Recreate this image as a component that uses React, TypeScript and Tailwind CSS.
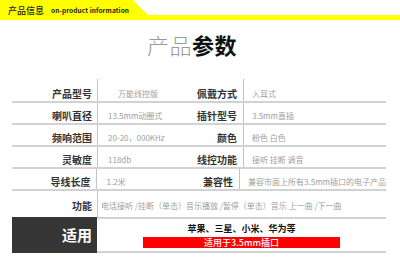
const font = { fontFamily: '"Noto Sans CJK SC", "Noto Sans", sans-serif' };

interface Row {
  l1: string;
  v1: string;
  pad1: string;
  l2: string;
  v2: string;
}

const rows: Row[] = [
  { l1: "产品型号", v1: "万能线控版", pad1: "pl-[20px]", l2: "佩戴方式", v2: "入耳式" },
  { l1: "喇叭直径", v1: "13.5mm动圈式", pad1: "pl-[10px]", l2: "插针型号", v2: "3.5mm直插" },
  { l1: "频响范围", v1: "20-20，000KHz", pad1: "pl-[10px]", l2: "颜色", v2: "粉色 白色" },
  { l1: "灵敏度", v1: "118db", pad1: "pl-[10px]", l2: "线控功能", v2: "接听 挂断 调音" },
  { l1: "导线长度", v1: "1.2米", pad1: "pl-[10px]", l2: "兼容性", v2: "兼容市面上所有3.5mm插口的电子产品" },
];

export default function App() {
  return (
    <div className="w-[400px] h-[260px] bg-white overflow-hidden" style={font}>
      {/* yellow header tab */}
      <div className="h-[20px] w-full bg-[#ffff00] flex items-center pl-[8px] gap-[7px] text-[#222] [clip-path:polygon(0_0,133px_0,148px_15px,100%_15px,100%_100%,0_100%)]">
        <span className="text-[9px] leading-none font-medium">产品信息</span>
        <span className="text-[6.5px] leading-none font-bold tracking-[0.1px]">on-product information</span>
      </div>

      <div className="mt-[11px] ml-[147px] text-[22px] leading-[26px] tracking-[0.5px]">
        <span className="text-[#999] font-light">产品</span>
        <span className="text-[#111] font-bold">参数</span>
      </div>

      <div className="mt-[22px] ml-[12px] w-[374px]">
        {rows.map((r, i) => (
          <div
            key={r.l1}
            className={`flex border-b-2 border-[#d2d2d2] ${i === 0 ? "h-[24px]" : "h-[22px]"}`}
          >
            <div className="w-[85px] flex items-end justify-end pr-[5px] pb-[1px] text-[10px] leading-[12px] font-bold text-[#333]">
              {r.l1}
            </div>
            <div className={`w-[100px] border-l border-[#c4c4c4] flex items-end pb-[1px] text-[8px] leading-[12px] text-[#a0a0a0] ${r.pad1}`}>
              {r.v1}
            </div>
            <div className="w-[46px] flex items-end justify-end pr-[6px] pb-[1px] text-[10px] leading-[12px] font-bold text-[#333]">
              {r.l2}
            </div>
            <div className="flex-1 border-l border-[#c4c4c4] flex items-end pl-[8px] pb-[1px] text-[8px] leading-[12px] text-[#a0a0a0] whitespace-nowrap">
              {r.v2}
            </div>
          </div>
        ))}

        <div className="flex h-[26px]">
          <div className="w-[85px] flex items-end justify-end pr-[5px] pb-[5px] text-[10px] leading-[12px] font-bold text-[#333]">
            功能
          </div>
          <div className="flex-1 border-l border-[#c4c4c4] flex items-end pl-[3px] pb-[5px] text-[8px] leading-[12px] text-[#a0a0a0] whitespace-nowrap">
            电话接听 /挂断（单击）音乐播放 /暂停（单击）音乐 上一曲 /下一曲
          </div>
        </div>

        <div className="flex h-[36px]">
          <div className="w-[85px] bg-[#363636] flex items-center justify-end pr-[5px] text-[15px] font-bold text-white">
            适用
          </div>
          <div className="flex-1 border-y-2 border-[#d2d2d2] flex flex-col items-center pt-[4px]">
            <div className="text-[9px] leading-[11px] font-bold text-[#111]">苹果、三星、小米、华为等</div>
            <div className="mt-[3px] w-[197px] h-[11px] bg-[#ff0000] flex items-center justify-center text-[9px] leading-[11px] font-medium text-white">
              适用于3.5mm插口
            </div>
          </div>
        </div>
      </div>
    </div>
  );
}
